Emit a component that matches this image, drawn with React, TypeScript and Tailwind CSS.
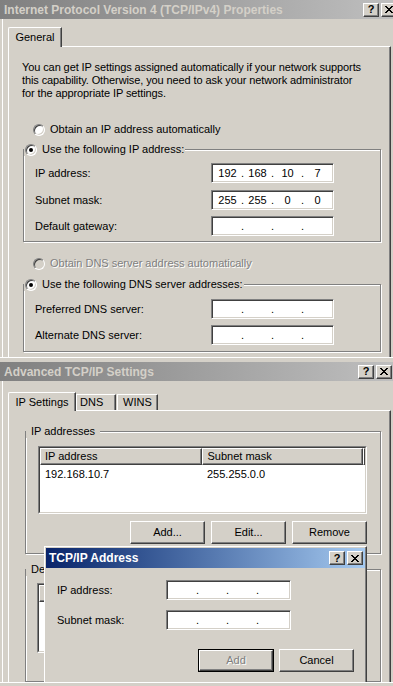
import { Fragment, type ReactNode } from "react";

const raised =
  "border border-t-white border-l-white border-r-[#404040] border-b-[#404040] shadow-[inset_-1px_-1px_0_#808080]";
const sunken =
  "border border-t-[#808080] border-l-[#808080] border-r-white border-b-white shadow-[inset_1px_1px_0_#404040,inset_-1px_-1px_0_#d4d0c8]";
const etched = "border border-[#808080] shadow-[1px_1px_0_#fff,inset_1px_1px_0_#fff]";
const grayText = "text-[#808080] [text-shadow:1px_1px_0_#fff]";

function CloseGlyph() {
  return (
    <svg width="8" height="7" viewBox="0 0 8 7" shapeRendering="crispEdges" fill="#000">
      <rect x="0" y="0" width="2" height="1" />
      <rect x="6" y="0" width="2" height="1" />
      <rect x="1" y="1" width="2" height="1" />
      <rect x="5" y="1" width="2" height="1" />
      <rect x="2" y="2" width="4" height="1" />
      <rect x="3" y="3" width="2" height="1" />
      <rect x="2" y="4" width="4" height="1" />
      <rect x="1" y="5" width="2" height="1" />
      <rect x="5" y="5" width="2" height="1" />
      <rect x="0" y="6" width="2" height="1" />
      <rect x="6" y="6" width="2" height="1" />
    </svg>
  );
}

function CaptionButton({ children }: { children: ReactNode }) {
  return (
    <div className={`flex h-[14px] w-[16px] items-center justify-center bg-[#d4d0c8] text-[11px] font-bold text-black ${raised}`}>
      {children}
    </div>
  );
}

function TitleBar({ title, active, className }: { title: string; active?: boolean; className: string }) {
  return (
    <div
      className={`flex shrink-0 items-center justify-between ${
        active ? "bg-linear-to-r from-[#0a246a] to-[#a6caf0] text-white" : "bg-linear-to-r from-[#808080] to-[#c0c0c0] text-[#d4d0c8]"
      } ${className}`}
    >
      <span className="text-[12px] leading-[14px] font-bold whitespace-nowrap">{title}</span>
      <div className="flex gap-[2px]">
        <CaptionButton>?</CaptionButton>
        <CaptionButton>
          <CloseGlyph />
        </CaptionButton>
      </div>
    </div>
  );
}

function Radio({ checked, disabled }: { checked?: boolean; disabled?: boolean }) {
  return (
    <span
      className={`flex h-[12px] w-[12px] shrink-0 items-center justify-center rounded-full ${
        disabled ? "bg-[#d4d0c8]" : "bg-white"
      } border border-t-[#808080] border-l-[#808080] border-r-white border-b-white shadow-[inset_1px_1px_0_#404040,inset_-1px_-1px_0_#d4d0c8]`}
    >
      {checked && <span className="h-[4px] w-[4px] rounded-full bg-black" />}
    </span>
  );
}

function RadioRow({ label, checked, disabled }: { label: string; checked?: boolean; disabled?: boolean }) {
  return (
    <div className="flex h-[13px] items-center gap-[5px] whitespace-nowrap">
      <Radio checked={checked} disabled={disabled} />
      <span className={disabled ? grayText : ""}>{label}</span>
    </div>
  );
}

function IpBox({ parts = ["", "", "", ""], className }: { parts?: string[]; className: string }) {
  return (
    <div className={`flex h-[20px] items-center bg-white pl-[2px] ${sunken} ${className}`}>
      {parts.map((p, i) => (
        <Fragment key={i}>
          <span className="w-[27px] text-center">{p}</span>
          {i < 3 && <span className="w-[3px] text-center">.</span>}
        </Fragment>
      ))}
    </div>
  );
}

function Field({ label, parts, labelW, boxW, className = "" }: { label: string; parts?: string[]; labelW: string; boxW: string; className?: string }) {
  return (
    <div className={`flex items-center ${className}`}>
      <span className={`whitespace-nowrap ${labelW}`}>{label}</span>
      <IpBox parts={parts} className={boxW} />
    </div>
  );
}

function Group({ label, className, children }: { label: ReactNode; className: string; children: ReactNode }) {
  return (
    <div className={`relative ${etched} ${className}`}>
      <div className="absolute -top-[7px] bg-[#d4d0c8]">{label}</div>
      {children}
    </div>
  );
}

function Tab({ children, selected, className }: { children: ReactNode; selected?: boolean; className: string }) {
  return (
    <div
      className={`flex items-center border-t border-l border-white border-r border-r-[#404040] bg-[#d4d0c8] whitespace-nowrap shadow-[inset_-1px_0_0_#808080] ${
        selected ? "relative z-10 -mb-px rounded-tl-[2px]" : ""
      } ${className}`}
    >
      {children}
    </div>
  );
}

function Button({ children, className, isDefault, disabled }: { children: ReactNode; className: string; isDefault?: boolean; disabled?: boolean }) {
  const inner = (
    <div className={`flex h-full w-full items-center justify-center bg-[#d4d0c8] ${raised} ${disabled ? grayText : ""}`}>{children}</div>
  );
  return <div className={`h-[23px] ${isDefault ? "border border-black" : ""} ${className}`}>{inner}</div>;
}

function ListView({ className, cols, rows }: { className: string; cols: string[]; rows: string[][] }) {
  return (
    <div className={`border border-t-[#808080] border-l-[#808080] border-r-white border-b-white ${className}`}>
      <div className="h-full border border-t-[#404040] border-l-[#404040] border-r-[#d4d0c8] border-b-[#d4d0c8] bg-white">
        <div className="flex h-[17px] bg-[#d4d0c8]">
          <div className={`flex w-[162px] items-center pl-[4px] ${raised}`}>{cols[0]}</div>
          <div className={`flex w-[162px] items-center pl-[5px] ${raised}`}>{cols[1]}</div>
          <div className={`flex-1 ${raised}`} />
        </div>
        {rows.map((r) => (
          <div key={r[0]} className="mt-[2px] flex h-[14px] items-center">
            <span className="w-[162px] pl-[5px]">{r[0]}</span>
            <span className="pl-[5px]">{r[1]}</span>
          </div>
        ))}
      </div>
    </div>
  );
}

function Ipv4Dialog() {
  return (
    <div className="flex h-[357px] w-[400px] flex-col">
      <TitleBar title="Internet Protocol Version 4 (TCP/IPv4) Properties" className="h-[19px] pl-[4px] pr-[3px]" />
      <div className="ml-[2px] flex min-h-0 flex-1 flex-col border-l border-white pl-[5px] pt-[8px]">
        <div className="flex">
          <Tab selected className="h-[20px] w-[54px] justify-center">
            General
          </Tab>
        </div>
        <div className="flex min-h-0 w-[383px] flex-1 flex-col border-t border-l border-white border-r border-r-[#404040] shadow-[inset_-1px_0_0_#808080]">
          <p className="ml-[13px] mt-[14px] tracking-[-0.1px] whitespace-nowrap">
            You can get IP settings assigned automatically if your network supports
            <br />
            this capability. Otherwise, you need to ask your network administrator
            <br />
            for the appropriate IP settings.
          </p>
          <div className="ml-[24px] mt-[23px]">
            <RadioRow label="Obtain an IP address automatically" />
          </div>
          <Group
            className="ml-[14px] mt-[13px] w-[358px]"
            label={
              <div className="pl-[1px] pr-px">
                <RadioRow checked label="Use the following IP address:" />
              </div>
            }
          >
            <div className="flex flex-col pl-[11px] pt-[13px] pb-[5px]">
              <Field label="IP address:" parts={["192", "168", "10", "7"]} labelW="w-[176px]" boxW="w-[123px]" />
              <Field label="Subnet mask:" parts={["255", "255", "0", "0"]} labelW="w-[176px]" boxW="w-[123px]" className="mt-[7px]" />
              <Field label="Default gateway:" labelW="w-[176px]" boxW="w-[123px]" className="mt-[6px]" />
            </div>
          </Group>
          <div className="ml-[24px] mt-[15px]">
            <RadioRow disabled label="Obtain DNS server address automatically" />
          </div>
          <Group
            className="ml-[14px] mt-[14px] w-[358px]"
            label={
              <div className="pl-[1px] pr-px">
                <RadioRow checked label="Use the following DNS server addresses:" />
              </div>
            }
          >
            <div className="flex flex-col pl-[11px] pt-[14px] pb-[6px]">
              <Field label="Preferred DNS server:" labelW="w-[176px]" boxW="w-[123px]" />
              <Field label="Alternate DNS server:" labelW="w-[176px]" boxW="w-[123px]" className="mt-[6px]" />
            </div>
          </Group>
        </div>
      </div>
    </div>
  );
}

function AdvancedDialog() {
  return (
    <div className="flex h-[324px] w-[400px] flex-col pt-[4px]">
      <TitleBar title="Advanced TCP/IP Settings" className="h-[19px] pl-[4px] pr-[8px]" />
      <div className="ml-[2px] flex min-h-0 flex-1 flex-col border-l border-white pl-[5px] pt-[11px]">
        <div className="flex items-end">
          <Tab selected className="h-[19px] w-[68px] justify-center">
            IP Settings
          </Tab>
          <Tab className="h-[16px] w-[40px] pl-[3px]">DNS</Tab>
          <Tab className="ml-px h-[16px] w-[41px] pl-[5px]">WINS</Tab>
        </div>
        <div className="flex min-h-0 w-[383px] flex-1 flex-col border-t border-l border-white border-r border-r-[#404040] shadow-[inset_-1px_0_0_#808080]">
          <Group className="ml-[16px] mt-[20px] w-[356px]" label={<div className="ml-[4px] pl-px pr-[5px]">IP addresses</div>}>
            <div className="flex flex-col pt-[14px] pr-[13px] pb-[9px] pl-[12px]">
              <ListView className="h-[68px] w-[329px]" cols={["IP address", "Subnet mask"]} rows={[["192.168.10.7", "255.255.0.0"]]} />
              <div className="mt-[7px] flex justify-end gap-[6px]">
                <Button className="w-[75px]">Add...</Button>
                <Button className="w-[75px]">Edit...</Button>
                <Button className="w-[75px]">Remove</Button>
              </div>
            </div>
          </Group>
          {/* only the start of this group shows beside the TCP/IP Address window */}
          <Group
            className="ml-[16px] mt-[15px] h-[140px] w-[356px]"
            label={<div className="ml-[4px] w-[14px] overflow-hidden pl-px whitespace-nowrap">De</div>}
          >
            <div className="pl-[11px] pt-[13px]">
              <ListView className="h-[70px] w-[329px]" cols={["", ""]} rows={[]} />
            </div>
          </Group>
        </div>
      </div>
    </div>
  );
}

function AddressDialog() {
  return (
    <div className="absolute left-[44px] top-[546px] flex h-[136px] w-[323px] flex-col border-t border-l border-white border-r border-r-[#404040] bg-[#d4d0c8] pl-px pt-px pr-px shadow-[inset_-1px_0_0_#808080]">
      <TitleBar active title="TCP/IP Address" className="h-[20px] pl-[3px] pr-[2px]" />
      <div className="flex flex-col pl-[11px] pt-[12px] pr-[11px]">
        <Field label="IP address:" labelW="w-[109px]" boxW="w-[125px]" />
        <Field label="Subnet mask:" labelW="w-[109px]" boxW="w-[125px]" className="mt-[10px]" />
        <div className="mt-[19px] flex justify-end gap-[5px]">
          <Button isDefault disabled className="w-[76px]">
            Add
          </Button>
          <Button className="w-[75px]">Cancel</Button>
        </div>
      </div>
    </div>
  );
}

export default function App() {
  return (
    <div className="relative h-[686px] w-[393px] overflow-hidden bg-[#d4d0c8] font-['Liberation_Sans',Arial,sans-serif] text-[11px] leading-[13px] text-black">
      <Ipv4Dialog />
      <div className="h-px w-full bg-white" />
      <AdvancedDialog />
      <div className="h-px w-full bg-white" />
      <AddressDialog />
    </div>
  );
}
